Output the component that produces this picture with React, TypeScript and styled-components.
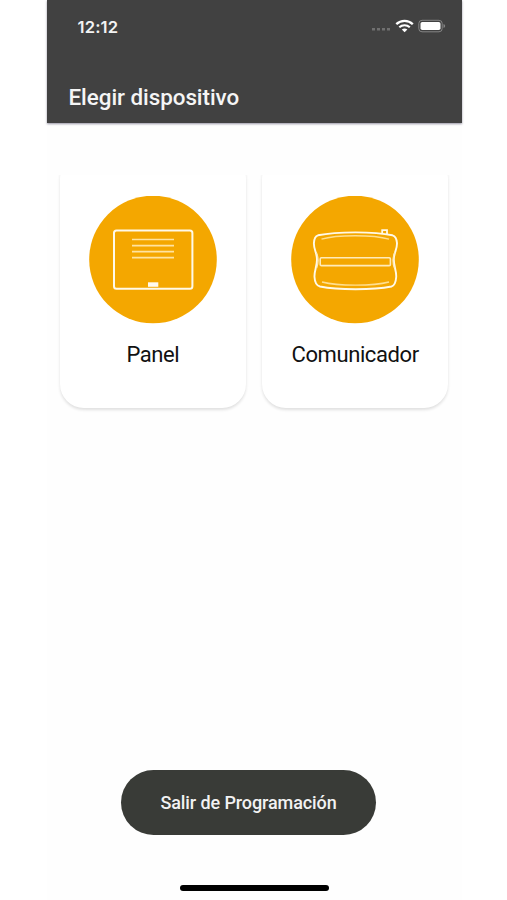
import React from "react";
import styled, { createGlobalStyle } from "styled-components";

const GlobalStyle = createGlobalStyle`
  * { box-sizing: border-box; }
  body { margin: 0; background: #fff; font-family: Roboto, sans-serif; }
`;

const Page = styled.div`
  width: 507px;
  height: 900px;
  padding: 0 45.5px 0 46.5px;
  overflow: hidden;
  background: #fff;
`;

const Screen = styled.main`
  height: 900px;
  display: flex;
  flex-direction: column;
  background: #fefefe;
`;

const Header = styled.header`
  height: 122.5px;
  flex: none;
  display: flex;
  flex-direction: column;
  justify-content: space-between;
  background: #414141;
  box-shadow: 0 1px 2px rgba(65, 60, 90, 0.55);
`;

const StatusBar = styled.div`
  height: 53px;
  padding: 0 16px 0 31px;
  display: flex;
  align-items: center;
  justify-content: space-between;
`;

const Clock = styled.time`
  font: 600 16.6px/20px Inter, sans-serif;
  letter-spacing: 0.15px;
  color: #f3f3f3;
`;

const StatusIcons = styled.svg`
  display: block;
  width: 76px;
  height: 16px;
  margin-bottom: 1px;
`;

const Title = styled.h1`
  margin: 0;
  padding: 0 22px 12px;
  font-size: 22.4px;
  line-height: 28px;
  font-weight: 500;
  letter-spacing: -0.04px;
  color: #f5f5f5;
`;

const Devices = styled.section`
  margin-top: 40.5px;
  padding: 12px 13.5px 8px;
  display: grid;
  grid-template-columns: 1fr 1fr;
  gap: 16.5px;
  overflow: hidden;
`;

const Card = styled.button`
  height: 253px;
  margin-top: -20px;
  padding: 40.5px 0 0;
  display: flex;
  flex-direction: column;
  align-items: center;
  border: 0;
  border-radius: 24px;
  background: #fff;
  box-shadow: 0 1.5px 3px rgba(0, 0, 0, 0.12);
  clip-path: inset(20px -5px -6px -5px);
  font-family: inherit;
`;

const DeviceIcon = styled.svg`
  display: block;
  width: 128px;
  height: 128px;
`;

const Label = styled.span`
  margin-top: 17px;
  font-size: 22px;
  line-height: 28px;
  color: #111;
  letter-spacing: -0.4px;
`;

const Footer = styled.footer`
  margin-top: auto;
  padding-bottom: 9px;
  display: flex;
  flex-direction: column;
  align-items: center;
  gap: 50.5px;
`;

const ExitButton = styled.button`
  width: 255px;
  height: 64.5px;
  margin-right: 11px;
  padding: 2px 0 0;
  border: 0;
  border-radius: 33px;
  background: #393b37;
  color: #f2f2f2;
  font: 500 18px/24px Roboto, sans-serif;
  letter-spacing: -0.1px;
`;

const HomeIndicator = styled.div`
  width: 149px;
  height: 6px;
  border-radius: 3px;
  background: #000;
`;

function PanelIcon() {
  return (
    <DeviceIcon viewBox="0 0 128 128" fill="none" aria-hidden="true">
      <circle cx="64" cy="63.5" r="63.8" fill="#f4a700" />
      <rect x="25" y="34.4" width="78.4" height="58.4" rx="2.5" stroke="#fff9e8" strokeWidth="2" />
      <path d="M43 43.5h42M43 49.6h42M43 55.7h42M43 61.7h42" stroke="#ffe3a0" strokeWidth="1.7" />
      <path d="M59 86.3h10.3v4.5H59z" fill="#fffaf0" />
    </DeviceIcon>
  );
}

function CommunicatorIcon() {
  return (
    <DeviceIcon viewBox="0 0 128 128" fill="none" aria-hidden="true">
      <circle cx="64" cy="63.5" r="63.8" fill="#f4a700" />
      <path
        d="M27 39.3C46 35.4 83 35.4 101.5 39.3C104.8 40.3 105.7 42.7 106 47C106.2 53.5 102.8 57 102.8 63.5C102.8 70.5 105.6 75 105.2 81C104.8 86.8 103.8 89.6 100.5 90.5C82 94.2 47 94.2 29 90.5C25.3 89.6 23.8 86.8 23.5 81C23.1 75 26 70.5 26 63.5C26 57 22.7 53.5 22.9 47C23.1 42.7 23.7 40.3 27 39.3Z"
        stroke="#fff9e8"
        strokeWidth="1.9"
      />
      <path d="M91.2 38v-3.8h4.8v4.8" stroke="#fff9e8" strokeWidth="1.8" />
      <path d="M30.5 43.2C46 38.6 82 38.6 98 43.2M31 86C47 90.2 82 90.2 98 86" stroke="#ffdf90" strokeWidth="1.3" />
      <path d="M25.2 56Q28.8 64 25.7 72M104 56Q100.3 64 103.4 72" stroke="#ffebb9" strokeWidth="1.2" />
      <rect x="29.2" y="61.8" width="70.2" height="7.8" rx="1.2" stroke="#ffebb9" strokeWidth="1.6" />
    </DeviceIcon>
  );
}

function StatusIndicators() {
  return (
    <StatusIcons viewBox="0 0 76 16" fill="none" aria-hidden="true">
      <path d="M2 11.2h3M7 11.2h3M12 11.2h3M17 11.2h3" stroke="#707070" strokeWidth="2.6" />
      <path d="M26.3 6.2C31 1.7 38.2 1.7 42.8 6.2" stroke="#fff" strokeWidth="2.3" />
      <path d="M29.3 9.3C32.4 6.5 36.8 6.5 39.8 9.3" stroke="#fff" strokeWidth="2.1" />
      <path d="M31.8 11.5Q34.6 9.3 37.4 11.5L34.6 14.3Z" fill="#fff" />
      <rect x="48.8" y="2.3" width="23.4" height="11.5" rx="3.2" stroke="#858585" />
      <rect x="50.5" y="4" width="20" height="8.1" rx="1.8" fill="#fff" />
      <path d="M73.5 6v4.1Q75.2 9.5 75.2 8T73.5 6Z" fill="#858585" />
    </StatusIcons>
  );
}

export default function App() {
  return (
    <Page>
      <GlobalStyle />
      <Screen>
        <Header>
          <StatusBar>
            <Clock>12:12</Clock>
            <StatusIndicators />
          </StatusBar>
          <Title>Elegir dispositivo</Title>
        </Header>
        <Devices>
          <Card>
            <PanelIcon />
            <Label>Panel</Label>
          </Card>
          <Card>
            <CommunicatorIcon />
            <Label>Comunicador</Label>
          </Card>
        </Devices>
        <Footer>
          <ExitButton>Salir de Programación</ExitButton>
          <HomeIndicator />
        </Footer>
      </Screen>
    </Page>
  );
}
